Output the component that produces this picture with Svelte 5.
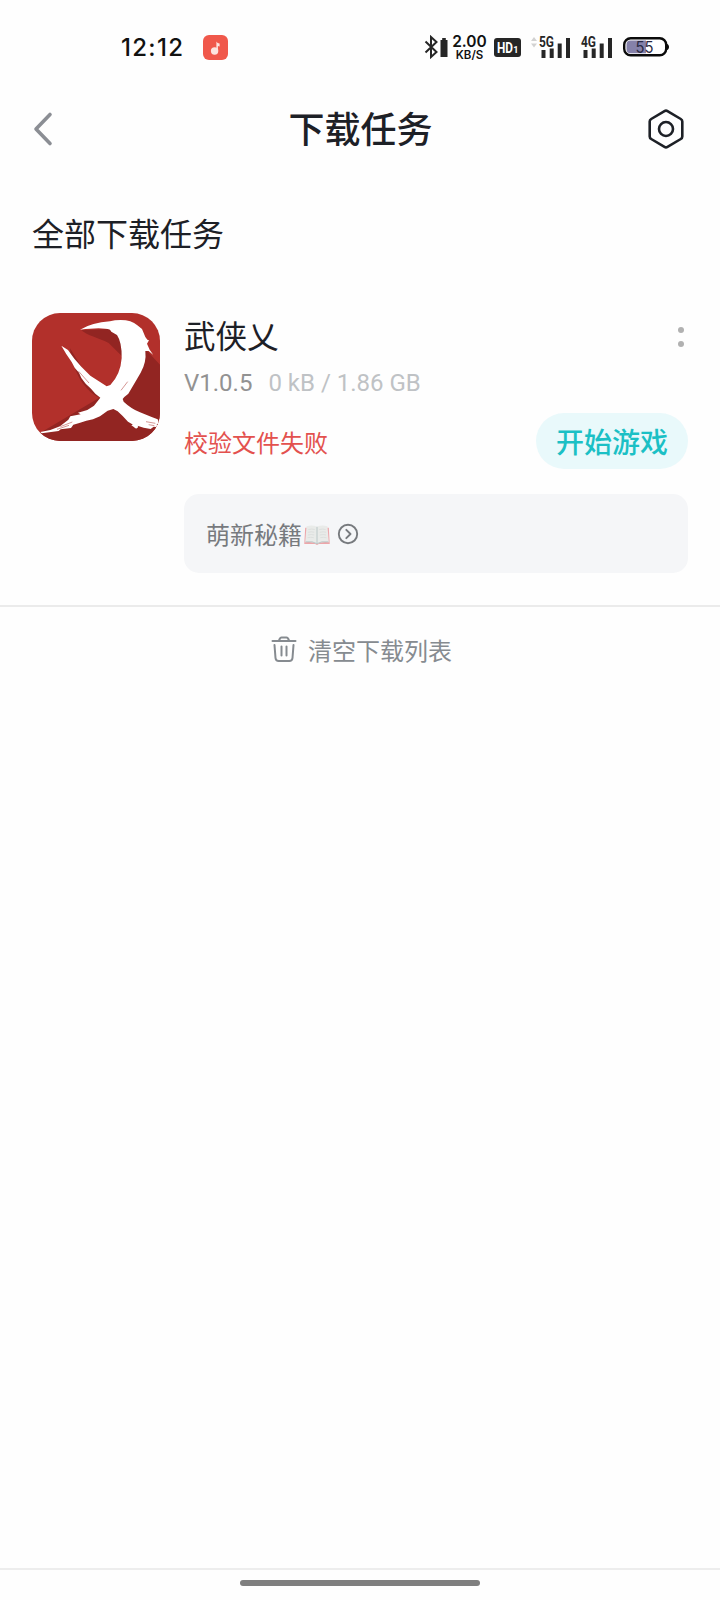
<script lang="ts">
	type Task = {
		name: string;
		version: string;
		progress: string;
		error: string;
		action: string;
		tip: string;
	};

	let tasks: Array<Task> = $state([
		{
			name: '武侠乂',
			version: 'V1.0.5',
			progress: '0 kB / 1.86 GB',
			error: '校验文件失败',
			action: '开始游戏',
			tip: '萌新秘籍'
		}
	]);

	const networks = ['5G', '4G'];

	const clearTasks = () => {
		tasks = [];
	};
</script>

<div class="screen">
	<div class="status-bar">
		<div class="status-left">
			<span class="clock">12:12</span>
			<svg width="25" height="25" viewBox="0 0 25 25">
				<rect width="25" height="25" rx="6" fill="#f0584b" />
				<circle cx="11.600" cy="16" r="3.700" fill="#fde4df" />
				<path d="M13.400 16V6.600c.7 1.300 1.700 2 3.200 2v2.800c-.7 0-1.200-.1-1.700-.4V16z" fill="#fde4df" />
			</svg>
		</div>
		<div class="status-right">
			<svg class="bluetooth" width="24" height="24" viewBox="0 0 24 24">
				<path d="M1.500 6.500 12.500 17 7 22V2l5.500 5L1.500 17.500" fill="none" stroke="#262626" stroke-width="2" />
				<path d="M16.500 5h1.700V3h3.600v2h1.700v17h-7z" fill="#262626" />
			</svg>
			<div class="speed">
				<b>2.00</b>
				<small>KB/S</small>
			</div>
			<svg class="hd" width="27" height="19" viewBox="0 0 27 19">
				<rect width="27" height="19" rx="3" fill="#262626" />
				<text x="3" y="14.500" textLength="16" lengthAdjust="spacingAndGlyphs" font-size="14">HD</text>
				<text x="19.200" y="15" font-size="9">1</text>
			</svg>
			{#each networks as network, i}
				<svg class="signal" width="42" height="30" viewBox="0 -4 42 30">
					{#if i === 0}
						<path d="M0 5l3-4 3 4zM0 7.500h6l-3 4z" fill="#d2d2d2" />
					{/if}
					<path d="M10.500 14h4v8h-4zM18.700 12.500h4V22h-4zM26.700 7.500h4V22h-4zM35 2h4v20h-4z" fill="#262626" />
					<text x="8" y="11" textLength="15" lengthAdjust="spacingAndGlyphs">{network}</text>
				</svg>
			{/each}
			<svg class="battery" width="47" height="20" viewBox="0 0 47 20">
				<path d="M43 6.500c4 .5 4 6.500 0 7z" fill="#0b0b0b" />
				<rect x="1.200" y="1.200" width="42" height="17" rx="6.500" fill="#fff" stroke="#0b0b0b" stroke-width="2.400" />
				<path d="M23 3.400H7.500a4 4 0 0 0-4 4v4.800a4 4 0 0 0 4 4H23z" fill="#8581aa" />
				<text x="12.500" y="15.500" textLength="18" lengthAdjust="spacingAndGlyphs">55</text>
			</svg>
		</div>
	</div>

	<header>
		<button aria-label="返回">
			<svg width="24" height="36" viewBox="0 0 24 36">
				<path d="M19 3.500 5 18l14 14.500" fill="none" stroke="#8b8e94" stroke-width="3.600" stroke-linecap="round" stroke-linejoin="round" />
			</svg>
		</button>
		<h1>下载任务</h1>
		<button aria-label="设置">
			<svg width="40" height="42" viewBox="0 0 40 42">
				<g fill="none" stroke="#1d2026" stroke-width="2.600">
					<path d="M18.500 3.100q1.500-.9 3 0l13.300 7.900q1.500.9 1.500 2.600v14.800q0 1.700-1.500 2.600l-13.300 7.900q-1.500.9-3 0L5.200 31q-1.500-.9-1.500-2.600V13.600q0-1.700 1.500-2.600z" />
					<circle cx="20" cy="21" r="7" />
				</g>
			</svg>
		</button>
	</header>

	<h2>全部下载任务</h2>

	{#each tasks as task}
		<article class="task">
			<svg class="cover" width="128" height="128" viewBox="36 40 384 384">
				<path d="M36 40h384v384H36z" fill="#b2302b" />
				<path d="M184 92c18 16 50 22 82 38l40 40-10 82-32 22-62-44-52-84c6 56 36 124 88 148L60 400l20 24h340V195l-38-40-40-70z" fill="#922522" />
				<path d="M180 90Q216 69 270 65L285 62Q330 57 352 77L366 88 376 112 382 120 387 122 381 132 389 150 400 166 386 154 376 154Q380 188 362 219L344 250 325 282 313 292 308 298 311 306Q332 326 360 338L395 352 413 359 418 371 410 374 414 383 401 381 392 388 371 384 357 380 342 377 324 366 308 349 293 335 280 328 263 333 240 350 219 359 199 363 178 370 160 375 153 385 122 389 116 394 65 401 61 397 91 391 120 380 145 360 151 350 182 344 174 339 202 331 222 318 241 294 226 282 213 267 197 252 184 235 177 219 164 204 155 187Q139 165 124 138L144 151 163 177 184 201 211 228 260 260 271 256Q302 223 305 175 306 128 291 106L274 96 270 90Q246 81 180 90Z" fill="#fff" />
				<path d="m176 215 31 35m96 22 20-26M111 389l36-12m-26 4 36-14M386 375l17 3m-25-12 28 5" fill="none" stroke="#aa2f2a" stroke-width="1.500" />
				<path d="M340 373q10-1 14 7 1 8-8 6-5-4-12-9z" fill="#fff" />
			</svg>
			<div class="info">
				<div class="title-row">
					<h3>{task.name}</h3>
					<button class="more" aria-label="更多"><i></i><i></i></button>
				</div>
				<p class="meta"><span>{task.version}</span>{task.progress}</p>
				<div class="state-row">
					<span class="error">{task.error}</span>
					<button class="start">{task.action}</button>
				</div>
				<div class="tip">
					<span>{task.tip}</span>
					<svg class="book" width="28" height="20" viewBox="0 0 28 22">
						<path d="M1 3h26l1 18H16l-2 1-2-1H0z" fill="#eda6aa" />
						<path d="M2.500 1.500Q9-.5 14 2q5-2.500 11.500-.5L27 19q-8-1-13 2-5-3-13-2z" fill="#e9ebe9" />
						<path d="M14 2v18M1.500 18.500q8-1 12.500 2 4.500-3 12.500-2" fill="none" stroke="#b6c4c4" />
						<path d="M4.500 5q4-1 7 0M4 8q4-1 7 0M4 11q4-1 7 0M3.500 14q4-1 7 0M16.500 5q4-1 7 0M17 8q4-1 7 0M17 11q4-1 7 0M17.500 14q4-1 7 0" fill="none" stroke="#d8dbda" stroke-width=".8" />
					</svg>
					<svg width="22" height="22" viewBox="0 0 22 22">
						<g fill="none" stroke="#777a7e" stroke-width="1.900" stroke-linecap="round" stroke-linejoin="round">
							<circle cx="11" cy="11" r="9.200" />
							<path d="m9.300 6.800 4.200 4.200-4.200 4.200" />
						</g>
					</svg>
				</div>
			</div>
		</article>
	{/each}

	<button class="clear" onclick={clearTasks}>
		<svg width="26" height="27" viewBox="0 0 26 27">
			<g fill="none" stroke="#868b90" stroke-width="2" stroke-linecap="round" stroke-linejoin="round">
				<path d="M1.500 5h23M8 4.500l.8-1.700q.5-1.300 1.700-1.300h5q1.200 0 1.700 1.300l.8 1.700M3.500 9l1 13q.3 3 3.200 3h10.600q2.900 0 3.200-3l1-13M10.500 10.500v9M15.500 10.500v9" />
			</g>
		</svg>
		清空下载列表
	</button>

	<footer>
		<div class="home-bar"></div>
	</footer>
</div>

<style>
	:global(body) {
		margin: 0;
	}

	.screen {
		display: flex;
		flex-direction: column;
		width: 720px;
		height: 1600px;
		background: #fefefe;
		color: #1d2026;
		font-family: Roboto, 'Noto Sans CJK SC', sans-serif;
		box-sizing: border-box;
	}

	svg {
		display: block;
		flex: none;
	}

	h1,
	h2,
	h3,
	p {
		margin: 0;
		font-weight: 400;
	}

	button {
		display: flex;
		align-items: center;
		border: none;
		padding: 0;
		background: none;
		font-family: inherit;
		color: inherit;
	}

	.status-bar {
		display: flex;
		justify-content: space-between;
		height: 94px;
		padding: 0 50px 0 121px;
		box-sizing: border-box;
		font-family: Inter, sans-serif;
		color: #111;
	}

	.status-left,
	.status-right {
		display: flex;
		align-items: center;
		height: 94px;
	}

	.clock {
		width: 82px;
		font-size: 24px;
		font-weight: 500;
		letter-spacing: 1.3px;
		white-space: nowrap;
	}

	.bluetooth {
		margin-right: 4px;
	}

	.speed {
		display: flex;
		flex-direction: column;
		align-items: center;
		width: 35px;
		margin-right: 7px;
		padding-top: 2px;
	}

	.speed b {
		font-size: 15.5px;
		font-weight: 600;
		line-height: 14px;
	}

	.speed small {
		font-size: 11.5px;
		font-weight: 600;
		line-height: 13px;
	}

	.hd {
		margin: 1px 10px 0 0;
		font-family: Roboto, sans-serif;
		font-weight: 700;
		fill: #fff;
	}

	.signal {
		font: 700 14px Roboto, sans-serif;
		fill: #262626;
	}

	.signal text {
		paint-order: stroke;
		stroke: #fefefe;
		stroke-width: 1.5px;
	}

	.battery {
		margin-left: 8px;
		font-size: 16px;
		fill: #292943;
	}

	header {
		display: flex;
		align-items: center;
		height: 70px;
		padding: 0 34px 0 31px;
	}

	header button {
		flex: 1;
	}

	header button:last-child {
		justify-content: flex-end;
	}

	h1 {
		padding: 4px 0 0 4px;
		font-size: 36px;
		font-weight: 500;
		line-height: 48px;
	}

	h2 {
		padding: 47px 32px 0;
		font-size: 32px;
		line-height: 48px;
	}

	.task {
		display: flex;
		gap: 24px;
		padding: 54px 32px 32px;
		border-bottom: 2px solid #ebebeb;
	}

	.cover {
		border-radius: 28px;
	}

	.info {
		flex: 1;
	}

	.title-row,
	.state-row {
		display: flex;
		align-items: center;
		justify-content: space-between;
	}

	h3 {
		padding-top: 1px;
		font-size: 31.5px;
		line-height: 47px;
	}

	.more {
		flex-direction: column;
		gap: 8px;
		padding: 0 4px;
	}

	.more i {
		width: 6px;
		height: 6px;
		border-radius: 50%;
		background: #b1b1b1;
	}

	.meta {
		padding-top: 2px;
		font-size: 24px;
		line-height: 40px;
		color: #bfc2c5;
	}

	.meta span {
		margin-right: 16px;
		color: #929292;
	}

	.state-row {
		margin-top: 10px;
	}

	.error {
		font-size: 24px;
		color: #e3514e;
	}

	.start {
		justify-content: center;
		width: 152px;
		height: 56px;
		border-radius: 28px;
		background: #e9f9fb;
		font-size: 28px;
		font-weight: 500;
		color: #1bc0c5;
	}

	.tip {
		display: flex;
		align-items: center;
		height: 79px;
		margin-top: 25px;
		padding-left: 22px;
		border-radius: 15px;
		background: #f5f6f8;
		font-size: 24px;
		color: #777a7e;
	}

	.book {
		margin: 2px 6px 0 1px;
	}

	.clear {
		gap: 11px;
		align-self: center;
		height: 84px;
		padding-left: 3px;
		font-size: 24px;
		color: #868b90;
	}

	footer {
		display: flex;
		justify-content: center;
		height: 20px;
		margin-top: auto;
		padding-top: 10px;
		border-top: 2px solid #ededed;
	}

	.home-bar {
		width: 240px;
		height: 6px;
		border-radius: 3px;
		background: #7f7f7f;
	}
</style>
